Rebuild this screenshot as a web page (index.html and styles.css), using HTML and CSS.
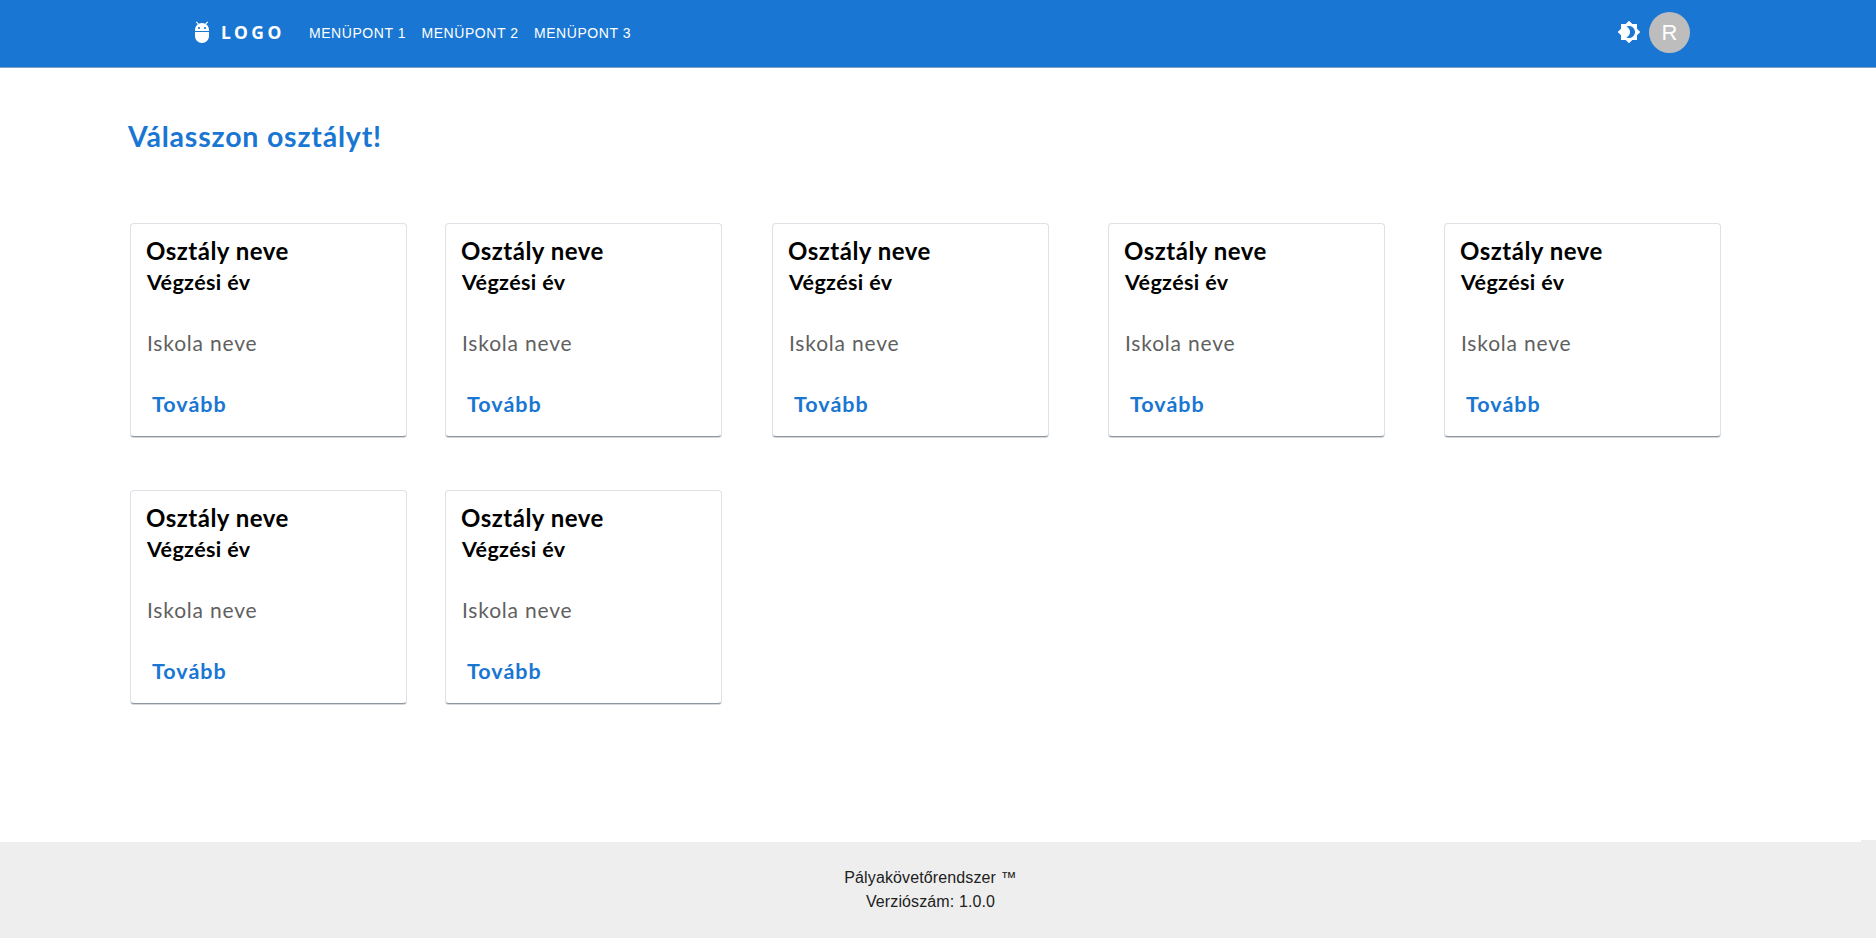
FILE: index.html
```html
<!DOCTYPE html>
<html lang="hu">
<head>
<meta charset="utf-8">
<title>Pályakövetőrendszer</title>
<link rel="stylesheet" href="styles.css">
</head>
<body>
<header class="appbar">
  <svg class="icon" viewBox="0 0 24 24"><path d="M5 16c0 3.87 3.13 7 7 7s7-3.13 7-7v-4H5v4zM16.12 4.37l2.1-2.1-.82-.83-2.3 2.31C14.16 3.28 13.12 3 12 3s-2.16.28-3.09.75L6.6 1.44l-.82.83 2.1 2.1C6.14 5.64 5 7.68 5 10v1h14v-1c0-2.32-1.14-4.36-2.88-5.63zM9 9c-.55 0-1-.45-1-1s.45-1 1-1 1 .45 1 1-.45 1-1 1zm6 0c-.55 0-1-.45-1-1s.45-1 1-1 1 .45 1 1-.45 1-1 1z"/></svg>
  <span class="logo">LOGO</span>
  <nav class="menu"><a>MENÜPONT 1</a><a>MENÜPONT 2</a><a>MENÜPONT 3</a></nav>
  <svg class="icon" viewBox="0 0 24 24"><path d="M20 8.69V4h-4.69L12 .69 8.69 4H4v4.69L.69 12 4 15.31V20h4.69L12 23.31 15.31 20H20v-4.69L23.31 12 20 8.69zM12 18c-.89 0-1.74-.2-2.5-.55C11.56 16.5 13 14.42 13 12s-1.44-4.5-3.5-5.45C10.26 6.2 11.11 6 12 6c3.31 0 6 2.69 6 6s-2.69 6-6 6z"/></svg>
  <span class="avatar">R</span>
</header>
<main class="content">
  <h1 class="heading"><span>Válasszon osztályt!</span></h1>
  <div class="grid">
    <article class="card"><h2 class="name">Osztály neve</h2><p class="year">Végzési év</p><p class="school">Iskola neve</p><a class="more">Tovább</a></article>
    <article class="card"><h2 class="name">Osztály neve</h2><p class="year">Végzési év</p><p class="school">Iskola neve</p><a class="more">Tovább</a></article>
    <article class="card"><h2 class="name">Osztály neve</h2><p class="year">Végzési év</p><p class="school">Iskola neve</p><a class="more">Tovább</a></article>
    <article class="card"><h2 class="name">Osztály neve</h2><p class="year">Végzési év</p><p class="school">Iskola neve</p><a class="more">Tovább</a></article>
    <article class="card"><h2 class="name">Osztály neve</h2><p class="year">Végzési év</p><p class="school">Iskola neve</p><a class="more">Tovább</a></article>
    <article class="card"><h2 class="name">Osztály neve</h2><p class="year">Végzési év</p><p class="school">Iskola neve</p><a class="more">Tovább</a></article>
    <article class="card"><h2 class="name">Osztály neve</h2><p class="year">Végzési év</p><p class="school">Iskola neve</p><a class="more">Tovább</a></article>
  </div>
</main>
<footer class="footer">
  <div class="footer-text"><p>Pályakövetőrendszer ™</p><p>Verziószám: 1.0.0</p></div>
  <div class="footer-edge"></div>
</footer>
</body>
</html>
```
FILE: styles.css
```css
* { box-sizing: border-box; margin: 0; padding: 0; }
body {
  height: 938px;
  display: flex;
  flex-direction: column;
  overflow: hidden;
  background: #fff;
  font-family: "Liberation Sans", Arial, sans-serif;
}
.appbar {
  height: 68px;
  flex: none;
  display: flex;
  align-items: center;
  padding: 1px 186px 3px 190px;
  background: #1976d2;
  color: #fff;
  border-bottom: 1px solid #7f9fc4;
}
.icon { width: 24px; height: 24px; margin-bottom: 1px; fill: #fff; flex: none; }
.logo {
  width: 88px;
  margin-left: 7px;
  padding-bottom: 2px;
  font: bold 17.5px/24px "Noto Sans", sans-serif;
  letter-spacing: 3.5px;
}
.menu { display: flex; gap: 16px; flex: 1; font-size: 14px; line-height: 24px; letter-spacing: .55px; }
.menu a { width: 96.5px; white-space: nowrap; }
.avatar {
  width: 41px;
  height: 41px;
  margin: 0 0 1px 8px;
  border-radius: 50%;
  background: #bdbdbd;
  font-size: 22px;
  line-height: 41px;
  text-align: center;
}
.content { flex: 1; padding: 47px 0 0 130px; font-family: Lato, sans-serif; }
.heading { height: 108px; margin-left: -2px; color: #1976d2; font-size: 28.5px; line-height: 42px; letter-spacing: .8px; }
.grid {
  display: grid;
  grid-template-columns: 315px 327px 336px 336px 277px;
  row-gap: 53px;
}
.card {
  width: 277px;
  height: 214px;
  padding: 14px 0 0 16px;
  background: #fff;
  border: 1px solid #dfe1e6;
  border-bottom-color: #8f969e;
  border-radius: 4px;
  box-shadow: 0 1px 0 #d5d8dd;
}
.name { margin-left: -1px; color: #000; font-size: 24px; line-height: 26px; letter-spacing: .5px; white-space: nowrap; }
.year { margin-top: 5px; font-size: 21.5px; font-weight: bold; line-height: 26px; letter-spacing: .35px; }
.school { margin-top: 35px; color: #5f5f5f; font-size: 21px; line-height: 26px; letter-spacing: .8px; }
.more { display: block; margin: 35px 0 0 5px; color: #1976d2; font-size: 21.5px; font-weight: bold; line-height: 26px; letter-spacing: 1px; }
.footer { height: 98px; flex: none; display: flex; align-items: flex-end; }
.footer-text {
  width: 1861px;
  height: 96px;
  padding-top: 24px;
  background: #eee;
  color: #212121;
  font-size: 16px;
  line-height: 24px;
  letter-spacing: .12px;
  text-align: center;
}
.footer-edge { flex: 1; height: 98px; background: #eee; }
```
